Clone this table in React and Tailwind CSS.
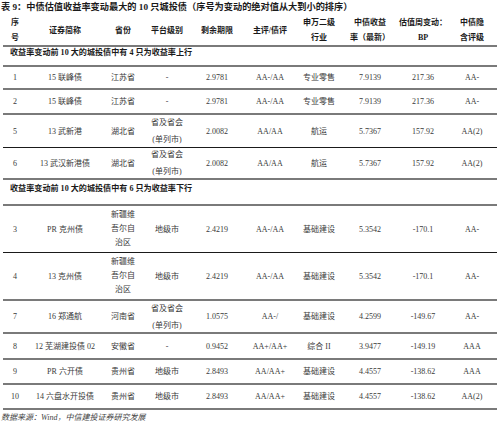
import React from "react";

const cols = [
  "w-[24px]",
  "w-[76px]",
  "w-[40px]",
  "w-[48px]",
  "w-[52px]",
  "w-[54px]",
  "w-[44px]",
  "w-[58px]",
  "w-[48px]",
  "w-[50px]",
];

const GRAY = "border-b-2 border-[#7a7a7a]";
const DARK = "border-b border-[#1a1a1a]";

const header = [
  ["序", "号"],
  ["证券简称"],
  ["省份"],
  ["平台级别"],
  ["剩余期限"],
  ["主评/债评"],
  ["申万二级", "行业"],
  ["中债收益", "率（最新）"],
  ["估值周变动：", "BP"],
  ["中债隐", "含评级"],
];

const CITY = ["省及省会", "(单列市)"];
const XJ = ["新疆维", "吾尔自", "治区"];

const up = [
  { h: "h-[23px]", line: GRAY, cells: ["1", "15 联峰债", "江苏省", "-", "2.9781", "AA-/AA", "专业零售", "7.9139", "217.36", "AA-"] },
  { h: "h-[25px]", line: GRAY, cells: ["2", "15 联峰债", "江苏省", "-", "2.9781", "AA-/AA", "专业零售", "7.9139", "217.36", "AA-"] },
  { h: "h-[33px]", line: DARK, cells: ["5", "13 武新港", "湖北省", CITY, "2.0082", "AA/AA", "航运", "5.7367", "157.92", "AA(2)"] },
  { h: "h-[32px]", line: GRAY, cells: ["6", "13 武汉新港债", "湖北省", CITY, "2.0082", "AA/AA", "航运", "5.7367", "157.92", "AA(2)"] },
];

const down = [
  { h: "h-[47px]", line: DARK, cells: ["3", "PR 克州债", XJ, "地级市", "2.4219", "AA-/AA", "基础建设", "5.3542", "-170.1", "AA-"] },
  { h: "h-[48px]", line: GRAY, cells: ["4", "13 克州债", XJ, "地级市", "2.4219", "AA-/AA", "基础建设", "5.3542", "-170.1", "AA-"] },
  { h: "h-[33px]", line: GRAY, cells: ["7", "16 郑通航", "河南省", CITY, "1.0575", "AA-/", "基础建设", "4.2599", "-149.67", "AA-"] },
  { h: "h-[26px]", line: GRAY, cells: ["8", "12 芜湖建投债 02", "安徽省", "-", "0.9452", "AA+/AA+", "综合 II", "3.9477", "-149.19", "AAA"] },
  { h: "h-[25px]", line: GRAY, cells: ["9", "PR 六开债", "贵州省", "地级市", "2.8493", "AA/AA+", "基础建设", "4.4557", "-138.62", "AAA"] },
  { h: "h-[25px]", line: GRAY, cells: ["10", "14 六盘水开投债", "贵州省", "地级市", "2.8493", "AA/AA+", "基础建设", "4.4557", "-138.62", "AA(2)"] },
];

function Cell({ value, i }) {
  const lines = Array.isArray(value) ? value : [value];
  const leading = lines.length === 3 ? "leading-[14px]" : lines.length === 2 ? "leading-[17px]" : "leading-[15px]";
  return (
    <div className={`${cols[i]} shrink-0 flex flex-col items-center justify-center text-center whitespace-nowrap ${leading}`}>
      {lines.map((l, k) => (
        <span key={k}>{l}</span>
      ))}
    </div>
  );
}

function Row({ row }) {
  return (
    <div className={`flex ${row.h} ${row.line}`}>
      {row.cells.map((c, i) => (
        <Cell key={i} value={c} i={i} />
      ))}
    </div>
  );
}

function Section({ h, children }) {
  return (
    <div className={`flex items-center ${h} ${GRAY} pl-[7px] pb-[5px] font-bold text-[8.1px] text-[#1a1a1a]`}>
      {children}
    </div>
  );
}

export default function App() {
  return (
    <div
      className="w-[500px] h-[426px] bg-white overflow-hidden text-[8px] text-[#3a3a3a]"
      style={{ fontFamily: '"Liberation Serif", "Noto Sans CJK SC", serif' }}
    >
      <div className="h-[15px] leading-[15px] pl-[1px] font-bold text-[9.2px] text-[#1a1a1a] whitespace-nowrap">
        表 9：中债估值收益率变动最大的 10 只城投债（序号为变动的绝对值从大到小的排序）
      </div>

      <div className="mx-[3px]">
        <div className={`flex h-[32px] ${GRAY} font-bold text-[#1a1a1a]`}>
          {header.map((c, i) => (
            <div key={i} className={`${cols[i]} shrink-0 flex flex-col items-center justify-center text-center whitespace-nowrap leading-[15px]`}>
              {c.map((l, k) => (
                <span key={k}>{l}</span>
              ))}
            </div>
          ))}
        </div>

        <Section h="h-[20px]">收益率变动前 10 大的城投债中有 4 只为收益率上行</Section>
        {up.map((r, i) => (
          <Row key={i} row={r} />
        ))}

        <Section h="h-[26px]">收益率变动前 10 大的城投债中有 6 只为收益率下行</Section>
        {down.map((r, i) => (
          <Row key={i} row={r} />
        ))}
      </div>

      <div className="h-[16px] leading-[16px] pl-[1px] italic text-[8px] text-[#444] whitespace-nowrap">
        数据来源：Wind，中信建投证券研究发展
      </div>
    </div>
  );
}
